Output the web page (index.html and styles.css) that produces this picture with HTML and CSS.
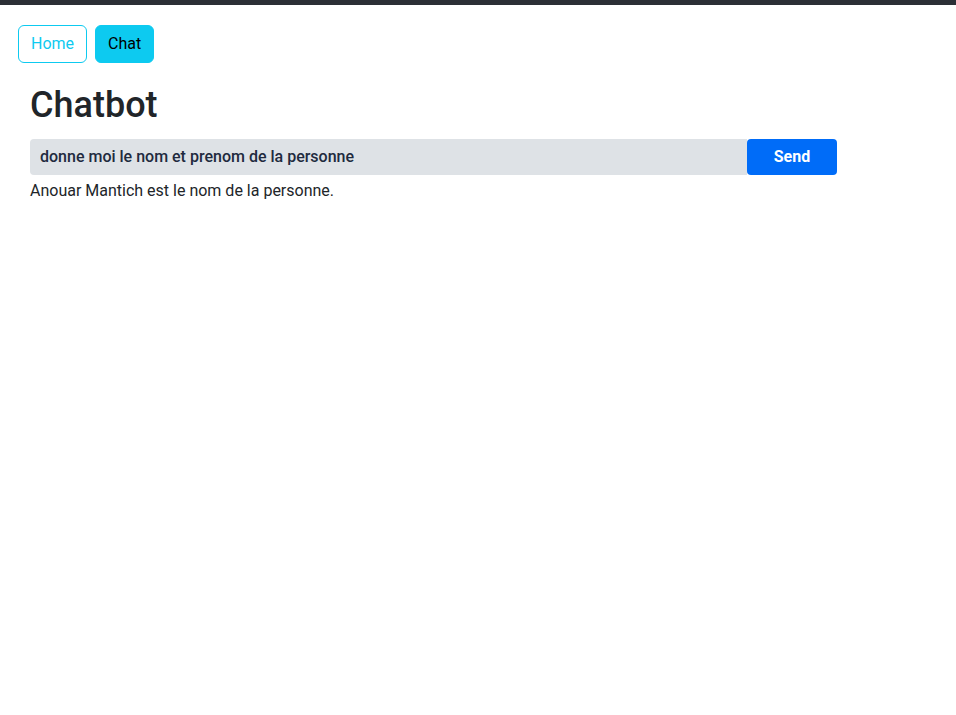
FILE: index.html
```html
<!DOCTYPE html>
<html lang="fr">
<head>
<meta charset="utf-8">
<title>Chatbot</title>
<link rel="stylesheet" href="styles.css">
</head>
<body>
<div class="topbar"></div>
<nav class="nav">
  <a class="btn btn-outline" href="#">Home</a>
  <a class="btn btn-fill" href="#">Chat</a>
</nav>
<main class="container">
  <h1 class="title">Chatbot</h1>
  <form class="chat-form">
    <input class="chat-input" type="text" value="donne moi le nom et prenom de la personne">
    <button class="send" type="button">Send</button>
  </form>
  <p class="answer">Anouar Mantich est le nom de la personne.</p>
</main>
</body>
</html>
```

FILE: styles.css
```css
* { box-sizing: border-box; }
body {
  margin: 0;
  font-family: Roboto, "Liberation Sans", sans-serif;
  font-size: 16px;
  line-height: 1.5;
  color: #212529;
  background: #fff;
}
.topbar {
  height: 5px;
  background: #2c2f36;
}
.nav {
  display: flex;
  gap: 8px;
  padding: 20px 18px 0;
}
.btn {
  display: inline-block;
  padding: 6px 12px;
  border: 1px solid #0dcaf0;
  border-radius: 6px;
  font-size: 16px;
  line-height: 24px;
  text-decoration: none;
}
.btn-outline { color: #0dcaf0; background: #fff; }
.btn-fill { color: #000; background: #0dcaf0; }
.container {
  padding: 0 30px;
}
.title {
  margin: 21px 0 12px;
  font-size: 36px;
  font-weight: 500;
  line-height: 43px;
}
.chat-form {
  display: flex;
  width: 807px;
  height: 36px;
}
.chat-input {
  flex: 1;
  min-width: 0;
  border: none;
  background: #dee2e6;
  border-radius: 4px 0 0 4px;
  padding: 0 10px 2px;
  font-family: Roboto, "Liberation Sans", sans-serif;
  font-size: 16px;
  font-weight: 500;
  color: #212a3e;
  outline: none;
}
.send {
  width: 90px;
  border: none;
  border-radius: 4px;
  background: #006cf8;
  color: #fff;
  padding: 0 0 2px;
  font-family: Roboto, "Liberation Sans", sans-serif;
  font-size: 16px;
  font-weight: 700;
}
.answer {
  margin: 4px 0 0;
}
```
